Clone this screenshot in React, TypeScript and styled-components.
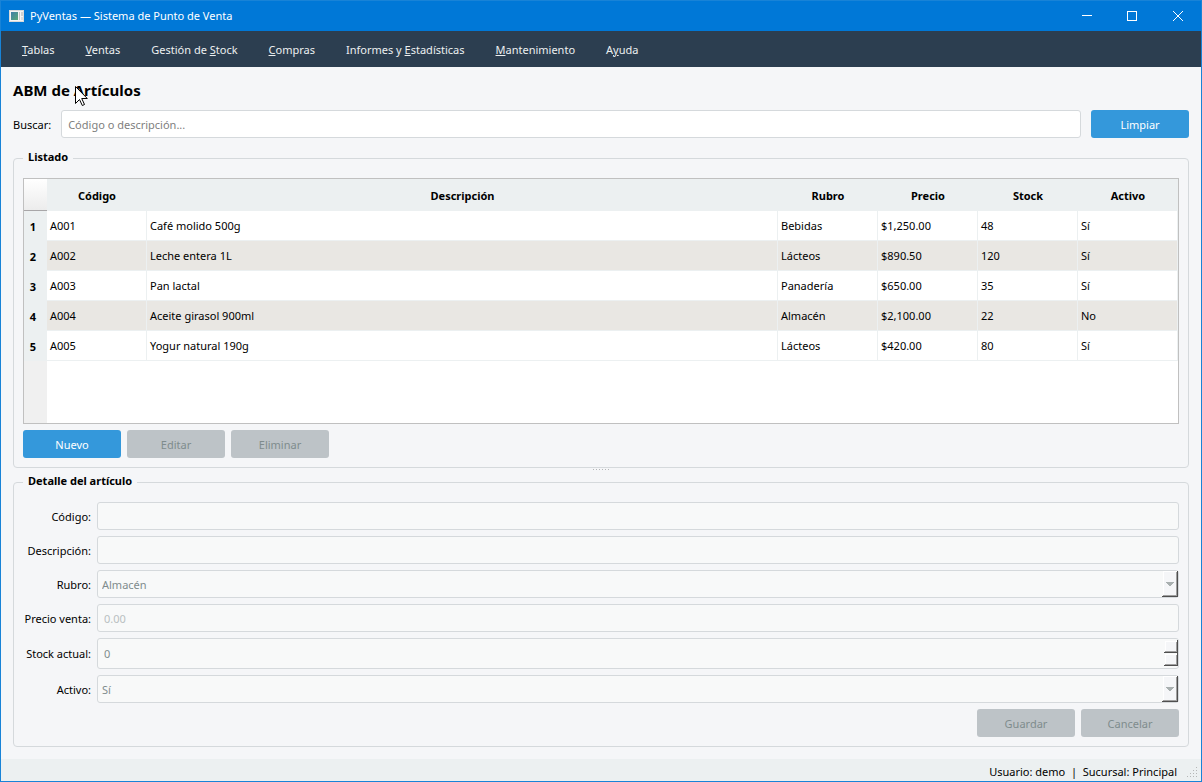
import React from "react";
import styled, { createGlobalStyle, css } from "styled-components";

const GlobalStyle = createGlobalStyle`
  *, *::before, *::after { box-sizing: border-box; }
  body { margin: 0; }
  body, button, input, select {
    font-family: "Noto Sans", "Open Sans", sans-serif;
    font-size: 11px;
    line-height: 16px;
    color: #000;
  }
`;

const Window = styled.div`
  position: relative;
  display: flex;
  flex-direction: column;
  min-height: 100vh;
  border: 1px solid #1883d7;
  background: #f5f6f8;
`;

const TitleBar = styled.header`
  display: flex;
  align-items: center;
  height: 30px;
  padding-left: 8px;
  background: #0078d7;
  color: #fff;
`;

const WindowTitle = styled.span`
  flex: 1;
  margin-left: 6px;
`;

const CaptionButton = styled.button`
  display: grid;
  place-items: center;
  width: 46px;
  height: 30px;
  padding: 0;
  border: 0;
  background: transparent;
  color: #fff;
`;

const MenuBar = styled.nav`
  display: flex;
  align-items: center;
  gap: 31px;
  height: 36px;
  padding: 2px 21px 0;
  background: #2c3e50;
`;

const MenuLink = styled.a`
  color: #ecf0f1;
  text-decoration: none;
  white-space: nowrap;
`;

const Content = styled.main`
  display: flex;
  flex: 1;
  flex-direction: column;
  padding: 12px;
`;

const Heading = styled.h1`
  margin: 0 0 8px;
  font-size: 15px;
  line-height: 23px;
  font-weight: 700;
`;

const SearchRow = styled.div`
  display: flex;
  align-items: center;
  gap: 10px;
  margin-bottom: 12px;
`;

const fieldStyle = css`
  width: 100%;
  height: 28px;
  padding: 0 6px;
  border: 1px solid #d5d9dc;
  border-radius: 3px;
  background: #fff;
  outline: 0;

  &::placeholder { color: #808080; opacity: 1; }

  &:disabled {
    background: #f8f9f9;
    color: #7f8c8d;
    opacity: 1;
  }
  &:disabled::placeholder { color: #b9c0c1; }
`;

const TextField = styled.input`
  ${fieldStyle}
`;

const NumberField = styled.input`
  ${fieldStyle}
  height: 31px;
  appearance: textfield;
  &::-webkit-inner-spin-button { display: none; }
`;

const Dropdown = styled.select`
  ${fieldStyle}
  padding: 2px 4px 0;
  appearance: none;
`;

const Button = styled.button`
  flex: none;
  width: 98px;
  height: 28px;
  padding: 2px 0 0;
  border: 0;
  border-radius: 3px;
  background: #3498db;
  color: #fff;

  &:disabled {
    background: #bdc3c7;
    color: #7f8c8d;
  }
`;

const Group = styled.fieldset`
  min-width: 0;
  margin: 0;
  padding: 12px 9px 9px;
  border: 1px solid #d5d9dc;
  border-radius: 4px;
`;

const GroupTitle = styled.legend`
  padding: 0 5px 2px;
  line-height: 14px;
  font-weight: 700;
`;

const TableFrame = styled.div`
  min-height: max(184px, calc(100vh - 536px));
  border: 1px solid #c0c0c0;
  background: linear-gradient(to right, #f0f0f0 23px, #fff 23px);
`;

const Table = styled.table`
  width: 100%;
  table-layout: fixed;
  border-collapse: separate;
  border-spacing: 0;
`;

const Column = styled.col<{ $width?: number }>`
  width: ${(p) => (p.$width ? `${p.$width}px` : "auto")};
`;

const HeaderCell = styled.th`
  height: 32px;
  padding: 2px 0 0;
  background: #ecf0f1;
  text-align: center;
`;

const CornerCell = styled.td`
  padding: 0;
  border-bottom: 1px solid #a8a6a8;
  background: linear-gradient(#fff, #ececec);
`;

const RowHeader = styled.th`
  padding: 1px 11px 0 0;
  background: #ecf0f1;
  text-align: right;
`;

const Row = styled.tr`
  height: 30px;
  background: #fff;
  &:nth-child(even) { background: #e9e7e3; }
`;

const Cell = styled.td`
  padding: 1px 3px 0;
  border-right: 1px solid #ecf0f1;
  border-bottom: 1px solid #ecf0f1;
`;

const Actions = styled.div<{ $end?: boolean }>`
  display: flex;
  gap: 6px;
  margin-top: 6px;
  justify-content: ${(p) => (p.$end ? "flex-end" : "flex-start")};
`;

const SplitHandle = styled.div`
  display: flex;
  justify-content: center;
  height: 6px;
  padding-top: 1px;
`;

const Form = styled.div`
  display: grid;
  grid-template-columns: 68px 1fr;
  align-items: center;
  gap: 6px;
`;

const FieldLabel = styled.label`
  display: flex;
  justify-content: flex-end;
  padding-top: 1px;
  white-space: nowrap;
`;

const Control = styled.div`
  position: relative;
  display: flex;
`;

const Adornment = styled.svg`
  position: absolute;
  top: 1px;
  right: 0;
  pointer-events: none;
`;

const StatusBar = styled.footer`
  display: flex;
  align-items: center;
  justify-content: flex-end;
  gap: 10px;
  height: 22px;
  padding: 4px 2px 0 0;
  background: #ecf0f1;
`;

const Pointer = styled.svg`
  position: absolute;
  top: 85px;
  left: 74px;
`;

const menus: [string, string, string][] = [
  ["", "T", "ablas"],
  ["", "V", "entas"],
  ["Gestión de ", "S", "tock"],
  ["", "C", "ompras"],
  ["Informes y ", "E", "stadísticas"],
  ["", "M", "antenimiento"],
  ["A", "y", "uda"],
];

const columns = ["Código", "Descripción", "Rubro", "Precio", "Stock", "Activo"];

const articles = [
  ["A001", "Café molido 500g", "Bebidas", "$1,250.00", "48", "Sí"],
  ["A002", "Leche entera 1L", "Lácteos", "$890.50", "120", "Sí"],
  ["A003", "Pan lactal", "Panadería", "$650.00", "35", "Sí"],
  ["A004", "Aceite girasol 900ml", "Almacén", "$2,100.00", "22", "No"],
  ["A005", "Yogur natural 190g", "Lácteos", "$420.00", "80", "Sí"],
];

const AppIcon = () => (
  <svg width="15" height="12" viewBox="0 0 15 12" shapeRendering="crispEdges" aria-hidden="true">
    <defs>
      <linearGradient id="pane" x1="0" y1="0" x2="1" y2="1">
        <stop offset="0" stopColor="#3f7fa8" />
        <stop offset="1" stopColor="#5aa876" />
      </linearGradient>
    </defs>
    <rect width="15" height="12" fill="#d9d9d9" />
    <rect x="1" y="1" width="13" height="10" fill="#f4f4f4" />
    <rect x="2" y="2" width="7" height="8" fill="url(#pane)" />
    <rect x="10" y="2" width="1" height="8" fill="#c8c8c8" />
    <rect x="12" y="2" width="2" height="4" fill="#d0d0d0" />
    <rect x="12" y="7" width="2" height="3" fill="#dcdcdc" />
  </svg>
);

const ComboArrow = () => (
  <Adornment width="17" height="26" viewBox="0 0 17 26" shapeRendering="crispEdges" aria-hidden="true">
    <rect x="1" y="0" width="15" height="26" fill="#f5f6f8" />
    <path d="M1 25V0H15V1H2V25Z" fill="#fff" />
    <path d="M14 1h1v24H1v-1h13Z" fill="#a0a0a0" />
    <path d="M15 0h1v26H0v-1h15Z" fill="#4f4f4f" />
    <path d="M4 11h8v1h-1v1h-1v1h-1v1H7v-1H6v-1H5v-1H4Z" fill="#a9b0b0" />
  </Adornment>
);

const SpinArrows = () => (
  <Adornment width="15" height="29" viewBox="0 0 15 29" shapeRendering="crispEdges" aria-hidden="true">
    {[2, 15].map((y) => (
      <g key={y}>
        <rect x="1" y={y} width="13" height="12" fill="#f5f6f8" />
        <path d={`M1 ${y}h12v1H2v10H1Z`} fill="#fff" />
        <path d={`M12 ${y + 1}h1v10H1v-1h11Z`} fill="#a0a0a0" />
        <path d={`M13 ${y - 1}h1v13H0v-1h13Z`} fill="#4f4f4f" />
      </g>
    ))}
  </Adornment>
);

const SizeGrip = () => (
  <svg width="12" height="12" viewBox="0 0 12 12" shapeRendering="crispEdges" aria-hidden="true">
    {[[9, 1], [6, 4], [9, 4], [3, 7], [6, 7], [9, 7], [0, 10], [3, 10], [6, 10], [9, 10]].map(([x, y]) => (
      <rect key={`${x}-${y}`} x={x} y={y} width="1" height="1" fill="#b4b6b6" />
    ))}
  </svg>
);

export default function App() {
  return (
    <>
      <GlobalStyle />
      <Window>
        <TitleBar>
          <AppIcon />
          <WindowTitle>PyVentas — Sistema de Punto de Venta</WindowTitle>
          <CaptionButton aria-label="Minimizar">
            <svg width="12" height="10" shapeRendering="crispEdges"><path d="M2 4.500h10" stroke="currentColor" /></svg>
          </CaptionButton>
          <CaptionButton aria-label="Maximizar">
            <svg width="10" height="10" shapeRendering="crispEdges"><rect x="0.5" y="0.5" width="9" height="9" fill="none" stroke="currentColor" /></svg>
          </CaptionButton>
          <CaptionButton aria-label="Cerrar">
            <svg width="10" height="10"><path d="M0 0l10 10M10 0L0 10" stroke="currentColor" /></svg>
          </CaptionButton>
        </TitleBar>
        <MenuBar>
          {menus.map(([before, key, after]) => (
            <MenuLink href="#" key={before + key + after}>
              {before}<u>{key}</u>{after}
            </MenuLink>
          ))}
        </MenuBar>
        <Content>
          <Heading>ABM de Artículos</Heading>
          <SearchRow>
            <FieldLabel htmlFor="buscar">Buscar:</FieldLabel>
            <TextField id="buscar" placeholder="Código o descripción..." />
            <Button>Limpiar</Button>
          </SearchRow>
          <Group>
            <GroupTitle>Listado</GroupTitle>
            <TableFrame>
              <Table>
                <colgroup>
                  <Column $width={23} />
                  <Column $width={100} />
                  <Column />
                  <Column $width={100} />
                  <Column $width={100} />
                  <Column $width={100} />
                  <Column $width={100} />
                </colgroup>
                <thead>
                  <tr>
                    <CornerCell />
                    {columns.map((name) => <HeaderCell scope="col" key={name}>{name}</HeaderCell>)}
                  </tr>
                </thead>
                <tbody>
                  {articles.map((article, index) => (
                    <Row key={article[0]}>
                      <RowHeader scope="row">{index + 1}</RowHeader>
                      {article.map((value, i) => <Cell key={columns[i]}>{value}</Cell>)}
                    </Row>
                  ))}
                </tbody>
              </Table>
            </TableFrame>
            <Actions>
              <Button>Nuevo</Button>
              <Button disabled>Editar</Button>
              <Button disabled>Eliminar</Button>
            </Actions>
          </Group>
          <SplitHandle>
            <svg width="16" height="1" shapeRendering="crispEdges" aria-hidden="true">
              {[0, 3, 6, 9, 12, 15].map((x) => <rect key={x} x={x} width="1" height="1" fill="#b4b6b8" />)}
            </svg>
          </SplitHandle>
          <Group>
            <GroupTitle>Detalle del artículo</GroupTitle>
            <Form>
              <FieldLabel htmlFor="codigo">Código:</FieldLabel>
              <TextField id="codigo" disabled />
              <FieldLabel htmlFor="descripcion">Descripción:</FieldLabel>
              <TextField id="descripcion" disabled />
              <FieldLabel htmlFor="rubro">Rubro:</FieldLabel>
              <Control>
                <Dropdown id="rubro" disabled><option>Almacén</option></Dropdown>
                <ComboArrow />
              </Control>
              <FieldLabel htmlFor="precio">Precio venta:</FieldLabel>
              <TextField id="precio" placeholder="0.00" disabled />
              <FieldLabel htmlFor="stock">Stock actual:</FieldLabel>
              <Control>
                <NumberField id="stock" type="number" defaultValue={0} disabled />
                <SpinArrows />
              </Control>
              <FieldLabel htmlFor="activo">Activo:</FieldLabel>
              <Control>
                <Dropdown id="activo" disabled><option>Sí</option></Dropdown>
                <ComboArrow />
              </Control>
            </Form>
            <Actions $end>
              <Button disabled>Guardar</Button>
              <Button disabled>Cancelar</Button>
            </Actions>
          </Group>
        </Content>
        <StatusBar>
          <span>Usuario: demo&nbsp; |&nbsp; Sucursal: Principal</span>
          <SizeGrip />
        </StatusBar>
        <Pointer width="13" height="21" viewBox="0 0 13 21" aria-hidden="true">
          <path d="M0.500 0.500v17l4-4 2.800 6 2.200-1-2.800-6h5.600Z" fill="#fff" stroke="#000" />
        </Pointer>
      </Window>
    </>
  );
}
